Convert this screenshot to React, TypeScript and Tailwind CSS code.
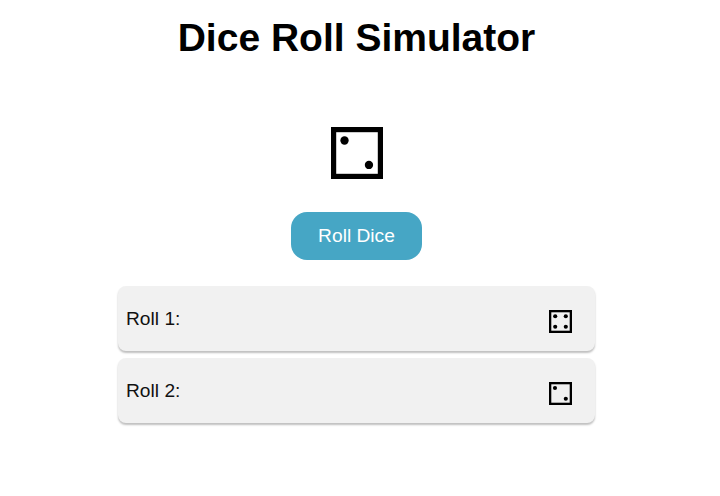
import React from 'react';

const pips: Record<number, [number, number][]> = {
  2: [[26, 26], [73, 73]],
  4: [[27, 27], [73, 27], [27, 73], [73, 73]],
};

function Die({ value, className, pipSize }: { value: number; className: string; pipSize: number }) {
  return (
    <svg viewBox="0 0 100 100" className={className}>
      <rect x="5" y="5" width="90" height="90" fill="none" stroke="#000" strokeWidth="10" />
      {pips[value].map(([cx, cy]) => (
        <circle key={`${cx}-${cy}`} cx={cx} cy={cy} r={pipSize} fill="#000" />
      ))}
    </svg>
  );
}

function RollRow({ label, value }: { label: string; value: number }) {
  return (
    <div className="flex h-[65px] items-center justify-between rounded-lg bg-[#f1f1f1] pl-2 pr-[23px] shadow-[0_2px_2px_rgba(0,0,0,0.25)]">
      <span className="text-[19.2px] leading-none text-[#111]">{label}</span>
      <Die value={value} className="mt-[6px] h-[23px] w-[23px]" pipSize={9} />
    </div>
  );
}

export default function App() {
  return (
    <div className="flex h-[496px] w-[713px] flex-col items-center bg-white pt-[15px] font-['Liberation_Sans',Arial,sans-serif]">
      <h1 className="text-[39px] leading-[46px] font-bold text-black">Dice Roll Simulator</h1>
      <div className="mt-[66px] h-[52px]">
        <Die value={2} className="h-[52px] w-[52px]" pipSize={8} />
      </div>
      <button className="mt-[33px] h-[48px] w-[131px] rounded-2xl bg-[#46a6c5] text-[19.2px] text-white">Roll Dice</button>
      <div className="mt-[26px] flex w-[477px] flex-col gap-[7px]">
        <RollRow label="Roll 1:" value={4} />
        <RollRow label="Roll 2:" value={2} />
      </div>
    </div>
  );
}
